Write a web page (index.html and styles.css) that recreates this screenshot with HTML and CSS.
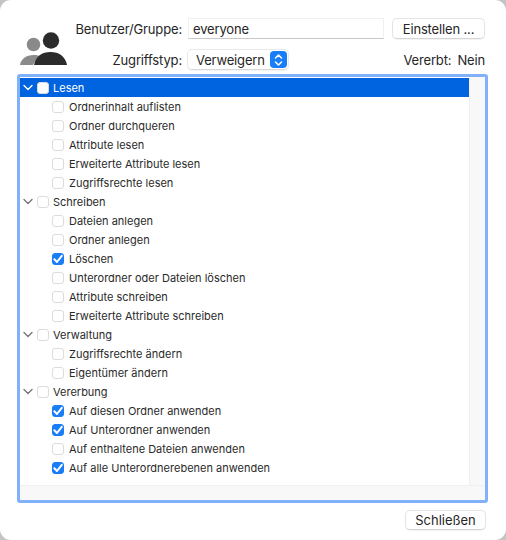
FILE: index.html
```html
<!DOCTYPE html>
<html lang="de">
<head>
    <meta charset="UTF-8">
    <meta name="viewport" content="width=device-width, initial-scale=1.0">
    <title>Zugriffsrechte</title>
    <link rel="stylesheet" href="styles.css">
</head>
<body>
    <div class="window">
        <div class="header">
            <svg class="people" width="48" height="36" viewBox="0 0 48 36">
                <circle cx="13.500" cy="12.500" r="6.800" fill="#8a8a8a"/>
                <path d="M0 33 C1 27 6 23 14 23 C17 23 19 23.500 21 24.500 C17 26.500 14.500 29.500 13 33 Z" fill="#8a8a8a"/>
                <circle cx="31" cy="8.500" r="8.200" fill="#2b2b2b"/>
                <path d="M14 33 C15.500 24.500 22 20 30.500 20 C39 20 45.500 24.500 47 33 Z" fill="#2b2b2b"/>
            </svg>
            <div class="fields">
                <div class="field-row">
                    <label class="label">Benutzer/Gruppe:</label>
                    <div class="text-input">everyone</div>
                    <button class="btn btn-set">Einstellen ...</button>
                </div>
                <div class="field-row">
                    <label class="label">Zugriffstyp:</label>
                    <div class="select">
                        <span>Verweigern</span>
                        <span class="stepper">
                            <svg width="9" height="14" viewBox="0 0 9 14" fill="none" stroke="#fff" stroke-width="1.500" stroke-linecap="round" stroke-linejoin="round">
                                <path d="M1.500 5 L4.500 2 L7.500 5"/>
                                <path d="M1.500 9 L4.500 12 L7.500 9"/>
                            </svg>
                        </span>
                    </div>
                    <div class="inherit"><span>Vererbt:</span><span>Nein</span></div>
                </div>
            </div>
        </div>

        <div class="list-frame">
            <div class="list-body">
                <div class="list">
                    <div class="row parent selected">
                        <svg class="chevron" width="10" height="7" viewBox="0 0 10 7"><path d="M1 1.500 L5 5.500 L9 1.500" fill="none" stroke="#fff" stroke-width="1.400" stroke-linecap="round" stroke-linejoin="round"/></svg>
                        <span class="box"></span>Lesen
                    </div>
                    <div class="row child"><span class="box"></span>Ordnerinhalt auflisten</div>
                    <div class="row child"><span class="box"></span>Ordner durchqueren</div>
                    <div class="row child"><span class="box"></span>Attribute lesen</div>
                    <div class="row child"><span class="box"></span>Erweiterte Attribute lesen</div>
                    <div class="row child"><span class="box"></span>Zugriffsrechte lesen</div>

                    <div class="row parent">
                        <svg class="chevron" width="10" height="7" viewBox="0 0 10 7"><path d="M1 1.500 L5 5.500 L9 1.500" fill="none" stroke="#777" stroke-width="1.400" stroke-linecap="round" stroke-linejoin="round"/></svg>
                        <span class="box"></span>Schreiben
                    </div>
                    <div class="row child"><span class="box"></span>Dateien anlegen</div>
                    <div class="row child"><span class="box"></span>Ordner anlegen</div>
                    <div class="row child"><span class="box checked"><svg width="14" height="14" viewBox="0 0 14 14"><path d="M3.300 7.300 L6 10 L10.800 3.800" fill="none" stroke="#fff" stroke-width="2" stroke-linecap="round" stroke-linejoin="round"/></svg></span>Löschen</div>
                    <div class="row child"><span class="box"></span>Unterordner oder Dateien löschen</div>
                    <div class="row child"><span class="box"></span>Attribute schreiben</div>
                    <div class="row child"><span class="box"></span>Erweiterte Attribute schreiben</div>

                    <div class="row parent">
                        <svg class="chevron" width="10" height="7" viewBox="0 0 10 7"><path d="M1 1.500 L5 5.500 L9 1.500" fill="none" stroke="#777" stroke-width="1.400" stroke-linecap="round" stroke-linejoin="round"/></svg>
                        <span class="box"></span>Verwaltung
                    </div>
                    <div class="row child"><span class="box"></span>Zugriffsrechte ändern</div>
                    <div class="row child"><span class="box"></span>Eigentümer ändern</div>

                    <div class="row parent">
                        <svg class="chevron" width="10" height="7" viewBox="0 0 10 7"><path d="M1 1.500 L5 5.500 L9 1.500" fill="none" stroke="#777" stroke-width="1.400" stroke-linecap="round" stroke-linejoin="round"/></svg>
                        <span class="box"></span>Vererbung
                    </div>
                    <div class="row child"><span class="box checked"><svg width="14" height="14" viewBox="0 0 14 14"><path d="M3.300 7.300 L6 10 L10.800 3.800" fill="none" stroke="#fff" stroke-width="2" stroke-linecap="round" stroke-linejoin="round"/></svg></span>Auf diesen Ordner anwenden</div>
                    <div class="row child"><span class="box checked"><svg width="14" height="14" viewBox="0 0 14 14"><path d="M3.300 7.300 L6 10 L10.800 3.800" fill="none" stroke="#fff" stroke-width="2" stroke-linecap="round" stroke-linejoin="round"/></svg></span>Auf Unterordner anwenden</div>
                    <div class="row child"><span class="box"></span>Auf enthaltene Dateien anwenden</div>
                    <div class="row child"><span class="box checked"><svg width="14" height="14" viewBox="0 0 14 14"><path d="M3.300 7.300 L6 10 L10.800 3.800" fill="none" stroke="#fff" stroke-width="2" stroke-linecap="round" stroke-linejoin="round"/></svg></span>Auf alle Unterordnerebenen anwenden</div>
                </div>
                <div class="scroll-v"></div>
            </div>
            <div class="scroll-h"></div>
        </div>

        <div class="footer">
            <button class="btn btn-close">Schließen</button>
        </div>
    </div>
</body>
</html>
```

FILE: styles.css
```css
* {
    box-sizing: border-box;
}
html, body {
    margin: 0;
    height: 100%;
    background: #c4c4c4;
}
body {
    font-family: Inter, "Liberation Sans", sans-serif;
    color: #262626;
}
.window {
    width: 506px;
    height: 540px;
    background: #fff;
    border-radius: 11px;
    padding: 17px 18px 0 17px;
    overflow: hidden;
}
.header {
    display: flex;
    height: 57px;
}
.people {
    margin: 15px 0 0 3px;
    flex: none;
}
.fields {
    flex: 1;
    display: flex;
    flex-direction: column;
    gap: 8px;
    margin-left: -48px;
}
.field-row {
    display: flex;
    align-items: center;
    height: 23px;
    font-size: 13px;
    letter-spacing: -0.15px;
}
.label {
    width: 114px;
    text-align: right;
    margin-left: 48px;
    margin-right: 6px;
    flex: none;
}
.text-input {
    width: 196px;
    height: 21px;
    padding: 2px 0 0 4px;
    line-height: 16px;
    border: 1px solid #f0f0f0;
    border-bottom-color: #c8c8c8;
    background: #fff;
}
.btn {
    font: inherit;
    letter-spacing: inherit;
    color: #262626;
    background: #fff;
    border: 1px solid #e4e4e4;
    border-bottom-color: #d4d4d4;
    border-radius: 5px;
    box-shadow: 0 1px 1px #0000000d;
    padding: 0;
    height: 21px;
}
.btn-set {
    width: 93px;
    margin-left: 8px;
}
.select {
    display: flex;
    align-items: center;
    justify-content: space-between;
    width: 102px;
    height: 21px;
    margin-left: -1px;
    padding: 0 1px 0 8px;
    border: 1px solid #e8e8e8;
    border-bottom-color: #d8d8d8;
    border-radius: 5px;
    box-shadow: 0 1px 1px #0000000d;
}
.stepper {
    display: flex;
    align-items: center;
    justify-content: center;
    width: 17px;
    height: 17px;
    border-radius: 4px;
    background: #1a7df8;
}
.inherit {
    display: flex;
    gap: 6px;
    margin-left: auto;
    padding-right: 3px;
}
.list-frame {
    width: 471px;
    height: 429px;
    border: 3px solid #82b1fb;
    border-radius: 3px;
    background: #f8f8f8;
    display: flex;
    flex-direction: column;
}
.list-body {
    display: flex;
    height: 408px;
    flex: none;
    padding-top: 1px;
    background: #fff;
}
.list {
    width: 449px;
    flex: none;
}
.scroll-v {
    width: 16px;
    flex: none;
    background: #f8f8f8;
    border-left: 1px solid #f0f0f0;
    margin-top: -1px;
}
.scroll-h {
    flex: 1;
    background: #f8f8f8;
    border-top: 1px solid #f0f0f0;
}
.row {
    display: flex;
    align-items: center;
    height: 19px;
    font-size: 11px;
    color: #2a2a2a;
}
.row.parent {
    padding-left: 3px;
}
.row.child {
    padding-left: 32px;
}
.row.selected {
    background: #0064e0;
    color: #fff;
}
.chevron {
    margin-right: 4px;
    flex: none;
}
.box {
    display: flex;
    align-items: center;
    justify-content: center;
    width: 12px;
    height: 12px;
    margin-right: 5px;
    border: 1px solid #dcdcdc;
    border-radius: 3px;
    background: #fff;
    flex: none;
}
.row.parent .box {
    margin-right: 4px;
}
.box.checked {
    background: #1a7df8;
    border-color: #1a7df8;
}
.box svg {
    flex: none;
}
.footer {
    display: flex;
    justify-content: flex-end;
    padding: 7px 2px 0 0;
}
.btn-close {
    width: 81px;
    height: 20px;
    font-size: 13px;
}
```
